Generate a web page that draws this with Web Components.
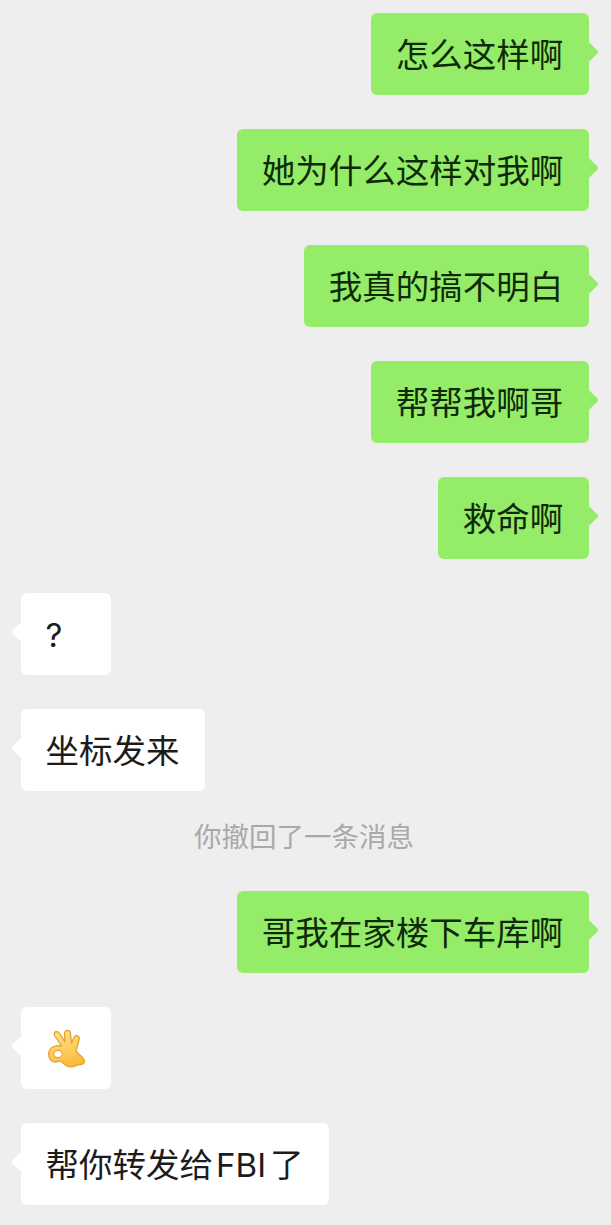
<!DOCTYPE html>
<html lang="zh">
<head>
<meta charset="utf-8">
<title>chat</title>
<style>
  html, body { margin: 0; background: #eeeeee; }
  body { font-family: "Noto Sans CJK SC", "Liberation Sans", sans-serif; }
</style>
</head>
<body>
<chat-list>
  <chat-bubble side="right">怎么这样啊</chat-bubble>
  <chat-bubble side="right">她为什么这样对我啊</chat-bubble>
  <chat-bubble side="right">我真的搞不明白</chat-bubble>
  <chat-bubble side="right">帮帮我啊哥</chat-bubble>
  <chat-bubble side="right">救命啊</chat-bubble>
  <chat-bubble side="left"><latin-text>?</latin-text></chat-bubble>
  <chat-bubble side="left">坐标发来</chat-bubble>
  <chat-notice>你撤回了一条消息</chat-notice>
  <chat-bubble side="right">哥我在家楼下车库啊</chat-bubble>
  <chat-bubble side="left"><ok-hand></ok-hand></chat-bubble>
  <chat-bubble side="left">帮你转发给<latin-text spaced>FBI</latin-text>了</chat-bubble>
</chat-list>
<script>
class chatList extends HTMLElement {
  constructor() {
    super();
    this.shadowDOM = this.attachShadow({ mode: "open" });
    this.shadowDOM.innerHTML = `
    <style>
      :host{
        display: flex;
        flex-direction: column;
        gap: 34px;
        padding: 13px 22px 20px 21px;
        box-sizing: border-box;
        width: 611px;
        height: 1225px;
        overflow: hidden;
      }
    </style>
    <slot></slot>
    `;
  }
}

class chatBubble extends HTMLElement {
  constructor() {
    super();
    this.shadowDOM = this.attachShadow({ mode: "open" });
    this.shadowDOM.innerHTML = `
    <style>
      :host{
        display: flex;
        justify-content: flex-start;
      }
      :host([side="right"]){
        justify-content: flex-end;
      }
      .bubble{
        position: relative;
        box-sizing: border-box;
        height: 82px;
        min-width: 90px;
        padding: 16px 25.7px 0 24.6px;
        border-radius: 6px;
        background: #fff;
        color: #1c1c1c;
        font-size: 33.5px;
        line-height: 48px;
        white-space: nowrap;
      }
      :host([side="right"]) .bubble{
        background: #95ec69;
        color: #0f2a08;
      }
      .bubble::after{
        content: "";
        position: absolute;
        top: 32px;
        width: 14px;
        height: 14px;
        border-radius: 2px;
        background: inherit;
        transform: rotate(45deg);
      }
      :host([side="left"]) .bubble::after{ left: -7px; }
      :host([side="right"]) .bubble::after{ right: -7px; }
    </style>
    <div class="bubble"><slot></slot></div>
    `;
  }
}

class latinText extends HTMLElement {
  constructor() {
    super();
    this.shadowDOM = this.attachShadow({ mode: "open" });
    this.shadowDOM.innerHTML = `
    <style>
      :host{
        display: inline-block;
        font-family: Inter, "Liberation Sans", sans-serif;
        font-size: 33px;
      }
      :host([spaced]){
        margin: 0 4px 0 3px;
      }
    </style>
    <slot></slot>
    `;
  }
}

class chatNotice extends HTMLElement {
  constructor() {
    super();
    this.shadowDOM = this.attachShadow({ mode: "open" });
    this.shadowDOM.innerHTML = `
    <style>
      :host{
        display: block;
        margin: -6px 2px 6px 0;
        text-align: center;
        color: #a9a9a9;
        font-size: 27.5px;
        line-height: 32px;
      }
    </style>
    <slot></slot>
    `;
  }
}

class okHand extends HTMLElement {
  constructor() {
    super();
    this.shadowDOM = this.attachShadow({ mode: "open" });
    this.shadowDOM.innerHTML = `
    <style>
      :host{ display: block; width: 40px; height: 40px; margin: 5px -1px 0 0; }
      svg{ display: block; }
    </style>
    <svg width="40" height="40" viewBox="0 0 40 40">
      <defs>
        <linearGradient id="skin" x1="0.3" y1="0" x2="0.6" y2="1">
          <stop offset="0" stop-color="#ffe08a"/>
          <stop offset="0.6" stop-color="#fdcb57"/>
          <stop offset="1" stop-color="#f9b93a"/>
        </linearGradient>
      </defs>
      <path d="M15.5 18 L8.5 7.5 C7.5 5 9 3.5 10.5 3.5 C12 3.5 13 4.5 14 6 L19 14 L18.5 6 C18.5 3.5 20 2.5 21.5 2.5 C23.5 2.5 24.5 4 24.5 6 L25.5 15 L28 9.5 C29 7.5 30.5 7 32 8 C33.5 9 33.5 10.5 33 12 L30 23 C33 27 38.5 29.5 38.5 33.5 C38.5 37 34 36.5 31 37 C28 39.5 23 39.5 20 37.5 C17 35 15.5 33.5 14 33 C10 35 5 34 3.5 30 C1.5 26 3 20 8 18.5 C10.5 17.5 13 17.5 15.5 18 Z" fill="url(#skin)" stroke="#e8a12e" stroke-width="1.3" stroke-linejoin="round"/>
      <ellipse cx="12" cy="26" rx="4.2" ry="3.6" fill="#fff" stroke="#e8a12e" stroke-width="1.1"/>
    </svg>
    `;
  }
}

customElements.define("chat-list", chatList);
customElements.define("chat-bubble", chatBubble);
customElements.define("latin-text", latinText);
customElements.define("chat-notice", chatNotice);
customElements.define("ok-hand", okHand);
</script>
</body>
</html>
